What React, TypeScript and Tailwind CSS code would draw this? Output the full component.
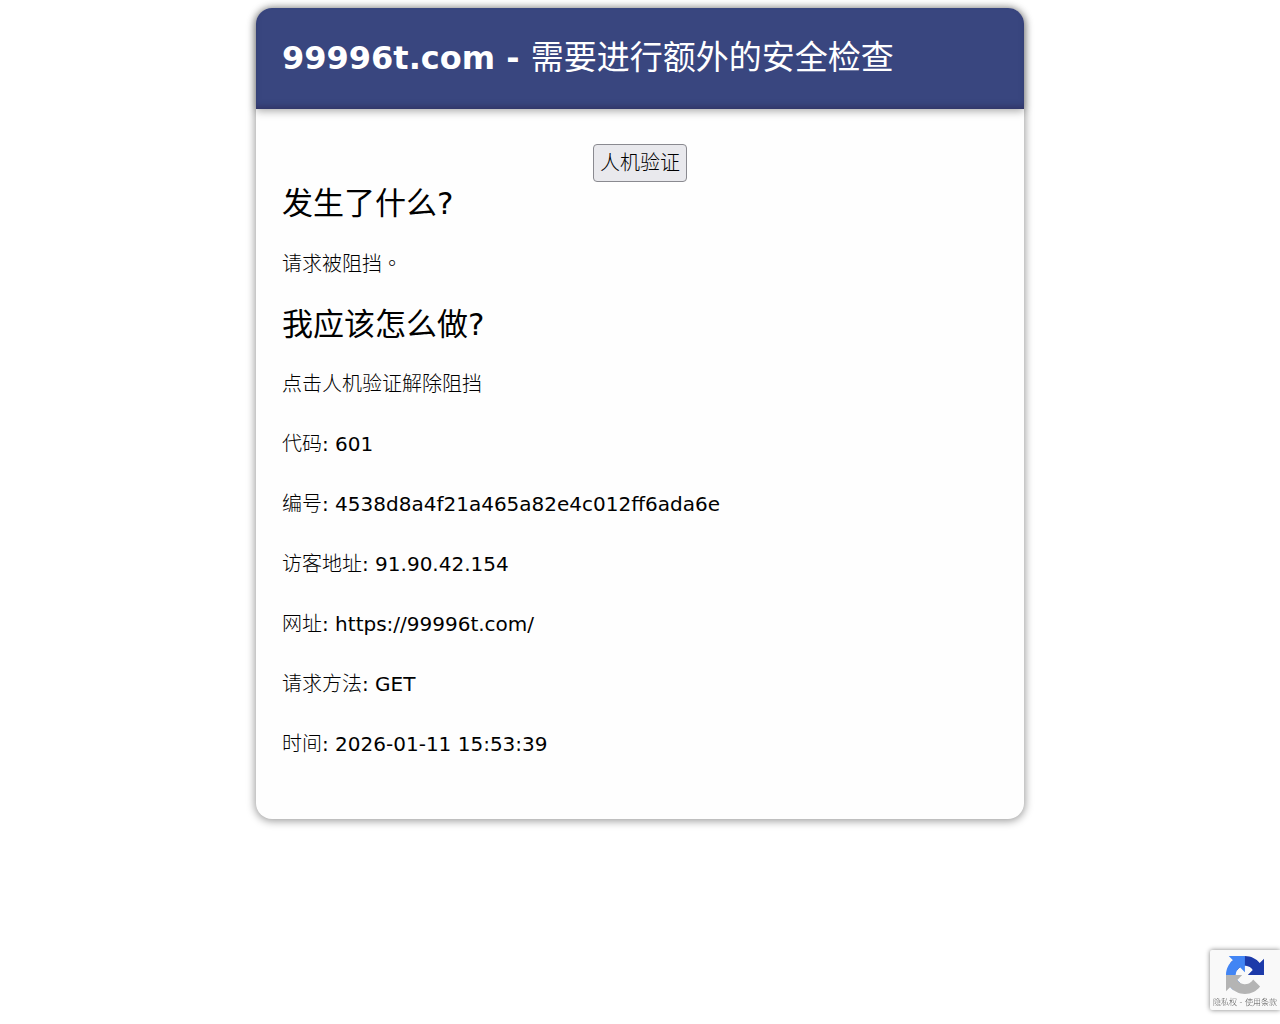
const details = [
  { label: '代码', value: '601' },
  { label: '编号', value: '4538d8a4f21a465a82e4c012ff6ada6e' },
  { label: '访客地址', value: '91.90.42.154' },
  { label: '网址', value: 'https://99996t.com/' },
  { label: '请求方法', value: 'GET' },
  { label: '时间', value: '2026-01-11 15:53:39' },
];

function RecaptchaLogo() {
  return (
    <svg viewBox="0 0 64 64" className="size-[38px]" aria-hidden="true">
      <path
        fill="#1c3aa9"
        d="M64 31.955l-.033-1.37V4.687l-7.16 7.16C50.948 4.674 42.033.093 32.05.093c-10.4 0-19.622 4.96-25.458 12.64l11.736 11.86a15.55 15.55 0 0 1 4.754-5.334c2.05-1.6 4.952-2.906 8.968-2.906.485 0 .86.057 1.135.163 4.976.393 9.288 3.14 11.828 7.124l-8.307 8.307L64 31.953"
      />
      <path
        fill="#4285f4"
        d="M31.862.094l-1.37.033H4.594l7.16 7.16C4.58 13.147 0 22.06 0 32.046c0 10.4 4.96 19.622 12.64 25.458L24.5 45.768a15.55 15.55 0 0 1-5.334-4.754c-1.6-2.05-2.906-4.952-2.906-8.968 0-.485.057-.86.163-1.135.393-4.976 3.14-9.288 7.124-11.828l8.307 8.307L31.86.095"
      />
      <path
        fill="#b4b4b4"
        d="M.001 32.045l.033 1.37v25.898l7.16-7.16c5.86 7.173 14.774 11.754 24.76 11.754 10.4 0 19.622-4.96 25.458-12.64l-11.736-11.86a15.55 15.55 0 0 1-4.754 5.334c-2.05 1.6-4.952 2.906-8.968 2.906-.485 0-.86-.057-1.135-.163-4.976-.393-9.288-3.14-11.828-7.124l8.307-8.307c-10.522.04-22.4.066-27.295-.005"
      />
    </svg>
  );
}

export default function App() {
  return (
    <div className="min-h-screen bg-white py-2 font-['DejaVu_Sans','Noto_Sans_CJK_SC',sans-serif] text-xl text-black">
      <main className="mx-auto w-3/5 rounded-2xl bg-[#fefefe] shadow-[0_1px_8px_1px_rgba(0,0,0,0.4)]">
        <header className="rounded-t-2xl bg-[#39467f] px-[26px] pt-[30px] pb-[31px] text-white shadow-[0_2px_8px_rgba(0,0,0,0.35),inset_0_-4px_6px_-2px_rgba(40,30,70,0.5)]">
          <h1 className="text-[32px] leading-10 font-bold">
            99996t.com - <span className="text-[33px] leading-8 font-normal">需要进行额外的安全检查</span>
          </h1>
        </header>
        <div className="flex flex-col px-[26px] pt-[35px] pb-[60px]">
          <button
            type="button"
            className="mb-[6px] self-center rounded-[4px] border border-[#8a8a90] bg-[#e9e9ed] px-[6px] py-[3px] leading-[30px] font-light"
          >
            人机验证
          </button>
          <div className="flex flex-col gap-[30px] leading-[30px]">
            <h2 className="text-[31px] leading-[30px] font-normal">发生了什么?</h2>
            <p className="font-light">
              请求被阻挡<span lang="zh-TW" className="font-['Noto_Sans_CJK_TC',sans-serif]">。</span>
            </p>
            <h2 className="text-[31px] leading-[30px] font-normal">我应该怎么做?</h2>
            <p className="font-light">点击人机验证解除阻挡</p>
            {details.map(({ label, value }) => (
              <p key={label}>
                <span className="font-light">{label}</span>: {value}
              </p>
            ))}
          </div>
        </div>
      </main>
      <aside className="fixed right-0 bottom-[14px] flex h-[60px] w-[70px] flex-col items-center rounded-l-[2px] bg-[#f9f9f9] pt-[6px] shadow-[0_0_5px_gray]">
        <RecaptchaLogo />
        <div className="mt-[3px] text-[8px] leading-3 font-light whitespace-nowrap text-[#555]">
          <a href="#privacy">隐私权</a> - <a href="#terms">使用条款</a>
        </div>
      </aside>
    </div>
  );
}
